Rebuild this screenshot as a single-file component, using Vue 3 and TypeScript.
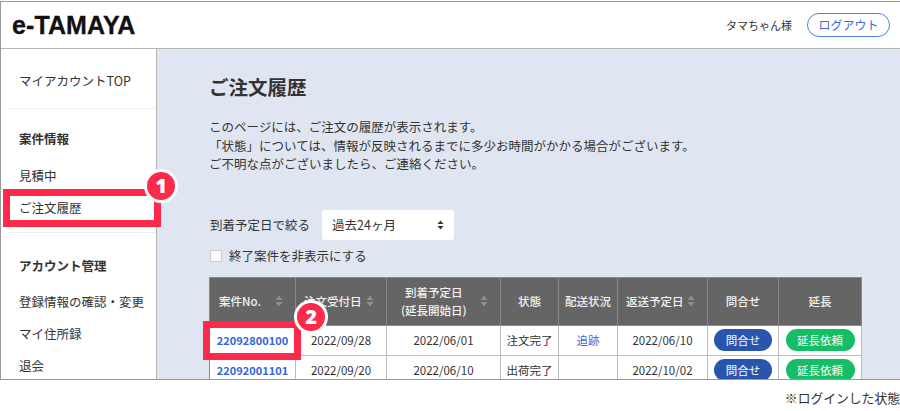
<template>
  <div class="page">
    <div class="frame">
      <header class="topbar">
        <div class="logo">e-TAMAYA</div>
        <div class="user">
          <span class="user__name">タマちゃん様</span>
          <a class="logout">ログアウト</a>
        </div>
      </header>

      <div class="body">
        <aside class="side">
          <a class="side__top">マイアカウントTOP</a>
          <hr class="side__rule" />
          <h3 class="side__head">案件情報</h3>
          <a class="side__link side__link--first">見積中</a>
          <a class="side__link">ご注文履歴</a>
          <hr class="side__rule side__rule--second" />
          <h3 class="side__head side__head--second">アカウント管理</h3>
          <a class="side__link side__link--first side__link--tight">登録情報の確認・変更</a>
          <a class="side__link">マイ住所録</a>
          <a class="side__link">退会</a>
        </aside>

        <main class="main">
          <h1 class="title">ご注文履歴</h1>
          <p class="lead">
            このページには、ご注文の履歴が表示されます。<br />
            「状態」については、情報が反映されるまでに多少お時間がかかる場合がございます。<br />
            ご不明な点がございましたら、ご連絡ください。
          </p>

          <div class="filter">
            <span>到着予定日で絞る</span>
            <div class="select">
              <span>過去24ヶ月</span>
              <svg width="7" height="10" viewBox="0 0 7 10"><path d="M3.5 0.5 6.5 4H.5zM3.5 9.5 .5 6h6z" fill="#333" /></svg>
            </div>
          </div>
          <label class="check"><span class="check__box"></span>終了案件を非表示にする</label>

          <table class="orders">
            <colgroup>
              <col v-for="w in colWidths" :key="w.id" :style="{ width: w.px + 'px' }" />
            </colgroup>
            <thead>
              <tr>
                <th v-for="h in headers" :key="h.id">
                  <div class="th" :class="{ 'th--center': !h.sort, 'th--double': h.sub, 'th--first': h.id === 'no' }">
                    <span>{{ h.label }}<template v-if="h.sub"><br />{{ h.sub }}</template></span>
                    <svg v-if="h.sort" width="8" height="12" viewBox="0 0 8 12"><path d="M4 .5 7.5 5H.5zM4 11.5 .5 7h7z" fill="#8f8f8f" /></svg>
                  </div>
                </th>
              </tr>
            </thead>
            <tbody>
              <tr v-for="r in rows" :key="r.no">
                <td><a class="no">{{ r.no }}</a></td>
                <td>{{ r.received }}</td>
                <td>{{ r.arrival }}</td>
                <td>{{ r.status }}</td>
                <td><a v-if="r.track" class="track">追跡</a></td>
                <td>{{ r.returnDate }}</td>
                <td><a class="pill pill--blue">問合せ</a></td>
                <td><a class="pill pill--green">延長依頼</a></td>
              </tr>
            </tbody>
          </table>
        </main>
      </div>
    </div>

    <p class="note">※ログインした状態</p>

    <!-- callouts over the screenshot -->
    <div class="mark mark--side"></div>
    <div class="mark mark--no"></div>
    <span class="badge badge--one">1</span>
    <span class="badge badge--two">2</span>
  </div>
</template>

<script setup lang="ts">
const colWidths = [
  { id: 'no', px: 86 },
  { id: 'received', px: 91 },
  { id: 'arrival', px: 114 },
  { id: 'status', px: 58 },
  { id: 'ship', px: 59 },
  { id: 'return', px: 90 },
  { id: 'ask', px: 71 },
  { id: 'extend', px: 83 },
];

const headers = [
  { id: 'no', label: '案件No.', sort: true },
  { id: 'received', label: '注文受付日', sort: true },
  { id: 'arrival', label: '到着予定日', sub: '(延長開始日)', sort: true },
  { id: 'status', label: '状態', sort: false },
  { id: 'ship', label: '配送状況', sort: false },
  { id: 'return', label: '返送予定日', sort: true },
  { id: 'ask', label: '問合せ', sort: false },
  { id: 'extend', label: '延長', sort: false },
];

const rows = [
  { no: '22092800100', received: '2022/09/28', arrival: '2022/06/01', status: '注文完了', track: true, returnDate: '2022/06/10' },
  { no: '22092001101', received: '2022/09/20', arrival: '2022/06/10', status: '出荷完了', track: false, returnDate: '2022/10/02' },
];
</script>

<style>
html,
body {
  margin: 0;
  background: #fff;
}
</style>

<style scoped>
.page {
  position: relative;
  width: 900px;
  height: 411px;
  overflow: hidden;
  background: #fff;
  color: #333;
  font-family: "Noto Sans CJK JP", "Noto Sans", sans-serif;
  font-size: 12px;
}
.frame {
  box-sizing: border-box;
  height: 379px;
  margin-top: 1px;
  border: solid #9a9a9a;
  border-width: 1px 0 1px 1px;
  display: flex;
  flex-direction: column;
  overflow: hidden;
}
.topbar {
  flex: none;
  box-sizing: border-box;
  height: 47px;
  display: flex;
  align-items: center;
  justify-content: space-between;
  padding: 0 10px 0 11px;
  border-bottom: 1px solid #b5b5b5;
}
.logo {
  font-family: "Liberation Sans", Arial, sans-serif;
  font-weight: 700;
  font-size: 25px;
  letter-spacing: 0.1px;
  -webkit-text-stroke: 0.3px #111;
  color: #111;
}
.user {
  display: flex;
  align-items: center;
  gap: 15px;
}
.user__name {
  font-size: 11px;
}
.logout {
  box-sizing: border-box;
  width: 83px;
  height: 24px;
  line-height: 21px;
  text-align: center;
  border: 1px solid #4d7fe8;
  border-radius: 12px;
  color: #3a6ae0;
  font-size: 12px;
}
.body {
  flex: 1;
  display: flex;
  min-height: 0;
}
.side {
  flex: none;
  box-sizing: border-box;
  width: 156px;
  padding: 22px 0 0 7px;
  border-right: 1px solid #b5b5b5;
  background: #fff;
}
.side a {
  display: block;
  padding-left: 11px;
  line-height: 20px;
  font-size: 12.5px;
}
.side__rule {
  margin: 17px 0 0;
  border: 0;
  border-top: 1px solid #eceef0;
}
.side__rule--second {
  margin-top: 14px;
}
.side__head {
  margin: 20px 0 0 11px;
  font-size: 12.5px;
  line-height: 20px;
  font-weight: 700;
}
.side__head--second {
  margin-top: 23px;
}
.side a.side__link {
  margin-top: 12px;
}
.side a.side__link--first {
  margin-top: 17px;
}
.side a.side__link--tight {
  margin-top: 16px;
}
.main {
  flex: 1;
  min-width: 0;
  padding: 24px 0 0 52px;
  background: #e0e6f1;
}
.title {
  margin: 0;
  font-size: 19.5px;
  line-height: 28px;
  font-weight: 700;
}
.lead {
  margin: 17px 0 0;
  font-size: 12.5px;
  line-height: 18.5px;
}
.filter {
  display: flex;
  align-items: center;
  gap: 12px;
  margin-top: 36px;
  padding-left: 1px;
  font-size: 12.5px;
}
.select {
  box-sizing: border-box;
  width: 132px;
  height: 30px;
  padding: 0 10px;
  display: flex;
  align-items: center;
  justify-content: space-between;
  background: #fff;
  border-radius: 3px;
}
.check {
  display: flex;
  align-items: center;
  gap: 7px;
  margin-top: 6px;
  padding-left: 1px;
  line-height: 20px;
  font-size: 12.5px;
}
.check__box {
  box-sizing: border-box;
  width: 12px;
  height: 12px;
  background: #fff;
  border: 1px solid #c4c4c4;
  border-radius: 2px;
}
.orders {
  margin-top: 11px;
  width: 652px;
  table-layout: fixed;
  border-collapse: separate;
  border-spacing: 0;
  background: #fff;
  border-left: 1px solid #8a8a8a;
}
.orders th {
  height: 47px;
  padding: 0;
  background: #656565;
  border-right: 1px solid #8a8a8a;
  border-top: 1px solid #8a8a8a;
  border-bottom: 1px solid #8a8a8a;
  color: #f2f2f2;
  font-size: 11.5px;
  font-weight: 500;
  line-height: 18px;
}
.th {
  display: flex;
  align-items: center;
  justify-content: space-between;
  padding: 0 12px 0 8px;
  text-align: center;
}
.th--first {
  padding-left: 9px;
}
.th--double {
  padding-left: 14px;
}
.th--center {
  justify-content: center;
  padding: 0;
}
.orders td {
  height: 29px;
  padding: 0;
  border-right: 1px solid #bdbdbd;
  border-bottom: 1px solid #bdbdbd;
  text-align: center;
  font-size: 11.5px;
}
.no {
  color: #2f66e0;
  font-weight: 700;
  font-size: 11px;
}
.track {
  color: #3a6ae0;
}
.pill {
  display: inline-block;
  height: 22px;
  line-height: 22px;
  border-radius: 11px;
  color: #fff;
  vertical-align: middle;
}
.pill--blue {
  width: 58px;
  background: #2856ae;
}
.pill--green {
  width: 69px;
  background: #14bd66;
}
.note {
  margin: 8px 0 0;
  text-align: right;
  font-size: 12.8px;
  line-height: 20px;
  color: #333;
}
.mark {
  position: absolute;
  box-sizing: border-box;
  border: 7px solid #fe2a4b;
}
.mark--side {
  left: 3px;
  top: 189px;
  width: 158px;
  height: 38px;
}
.mark--no {
  left: 203px;
  top: 321px;
  width: 98px;
  height: 39px;
}
.badge {
  position: absolute;
  box-sizing: border-box;
  width: 34px;
  height: 34px;
  border: 3px solid #fff;
  border-radius: 50%;
  background: #fe2a4b;
  color: #fff;
  font-family: "Noto Sans", sans-serif;
  font-weight: 900;
  font-size: 20px;
  line-height: 27px;
  text-align: center;
}
.badge--one {
  left: 144px;
  top: 169px;
}
.badge--two {
  left: 294px;
  top: 300px;
}
</style>
